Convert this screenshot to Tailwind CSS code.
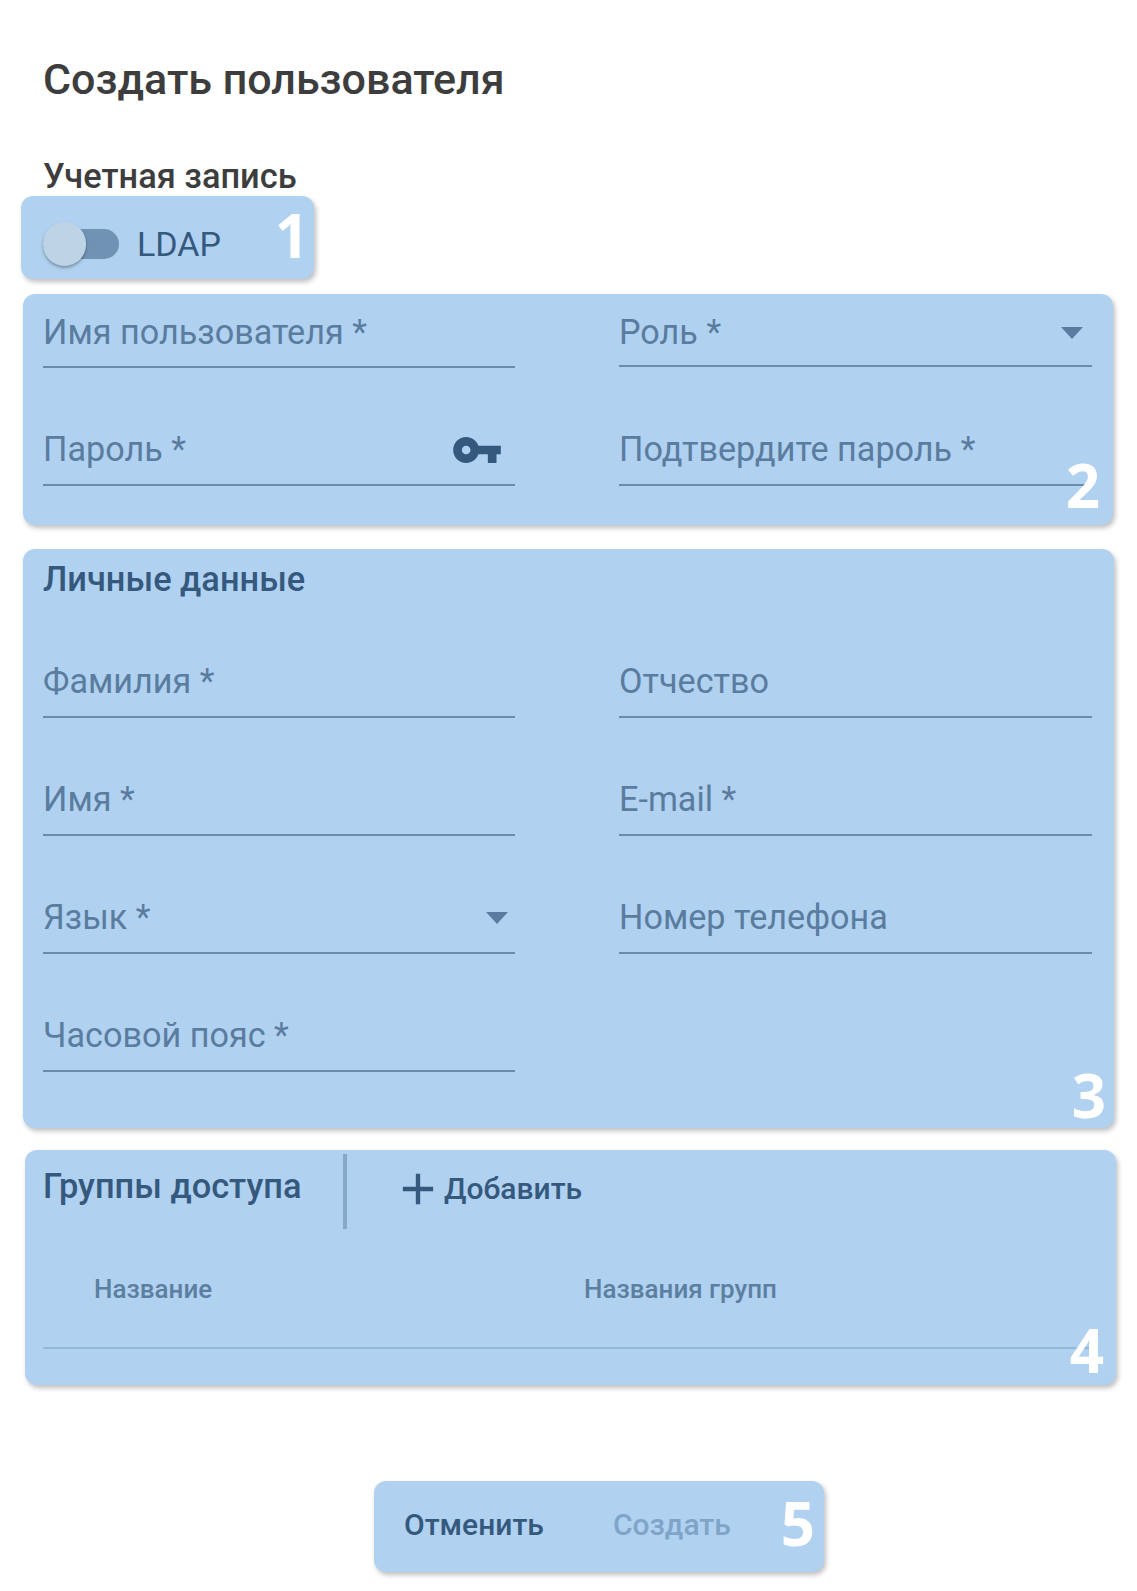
<!DOCTYPE html>
<html lang="ru">
<head>
  <meta charset="UTF-8">
  <title>Создать пользователя</title>
  <script src="https://cdn.jsdelivr.net/npm/@tailwindcss/browser@4"></script>
</head>
<body class="bg-white font-['Roboto',sans-serif] h-[1591px] overflow-hidden">
  <h1 class="pl-[43px] pt-[55px] text-[43px] leading-[48px] font-medium text-[#3d3d3d]">Создать пользователя</h1>
  <h2 class="pl-[43px] mt-[54px] text-[34.4px] leading-[38px] font-medium text-[#3d3d3d]">Учетная запись</h2>

  <!-- 1: LDAP -->
  <div class="relative ml-[21px] mt-[1px] w-[293px] h-[83px] rounded-[12px] bg-[#b0d1f0] shadow-[2px_3px_5px_rgba(0,0,0,0.25)] flex items-center pl-[22px]">
    <div class="relative w-[76px] h-[44px] flex items-center mt-[13px]">
      <div class="w-full h-[30px] rounded-full bg-[#7092b3]"></div>
      <div class="absolute left-0 top-0 w-[43px] h-[44px] rounded-full bg-[#bdd3e6] shadow-[0_2px_3px_rgba(0,0,0,0.3)]"></div>
    </div>
    <span class="ml-[18px] mt-[12px] text-[34px] leading-[40px] text-[#35587d]">LDAP</span>
    <span class="absolute right-[5px] top-[7px] font-['Open_Sans',sans-serif] font-bold text-[60px] leading-[64px] text-white">1</span>
  </div>

  <!-- 2: account fields -->
  <div class="relative ml-[23px] mt-[15px] w-[1090px] h-[231px] rounded-[12px] bg-[#b0d1f0] shadow-[2px_3px_5px_rgba(0,0,0,0.25)] pl-[20px] pt-[8px]">
    <div class="grid grid-cols-[472px_473px] gap-x-[104px] gap-y-[52px]">
      <div class="h-[66px] pb-[2px] flex items-center border-b-2 border-[#6a8cad] text-[34.2px] text-[#5a7c9e]">Имя пользователя *</div>
      <div class="h-[65px] pb-[2px] flex items-center justify-between border-b-2 border-[#6a8cad] text-[34.2px] text-[#5a7c9e]">
        Роль *
        <svg class="mr-[9px] w-[22px] h-[12px]" viewBox="0 0 22 12"><path d="M0 0h22L11 12z" fill="#5a7c9e"/></svg>
      </div>
      <div class="h-[66px] pb-[4px] flex items-center justify-between border-b-2 border-[#6a8cad] text-[34.2px] text-[#5a7c9e]">
        Пароль *
        <svg class="mr-[12px] w-[52px] h-[52px]" viewBox="0 0 24 24"><path fill="#35587d" d="M12.65 10C11.83 7.67 9.61 6 7 6c-3.31 0-6 2.69-6 6s2.69 6 6 6c2.61 0 4.83-1.67 5.65-4H17v4h4v-4h2v-4H12.65zM7 14c-1.1 0-2-.9-2-2s.9-2 2-2 2 .9 2 2-.9 2-2 2z"/></svg>
      </div>
      <div class="h-[66px] pb-[4px] flex items-center border-b-2 border-[#6a8cad] text-[34.2px] text-[#5a7c9e]">Подтвердите пароль *</div>
    </div>
    <span class="absolute right-[13px] top-[159px] font-['Open_Sans',sans-serif] font-bold text-[60px] leading-[64px] text-white">2</span>
  </div>

  <!-- 3: personal data -->
  <div class="relative ml-[23px] mt-[24px] w-[1091px] h-[579px] rounded-[12px] bg-[#b0d1f0] shadow-[2px_3px_5px_rgba(0,0,0,0.25)] pl-[20px] pt-[11px]">
    <h3 class="text-[34.4px] leading-[38px] font-medium text-[#35587d]">Личные данные</h3>
    <div class="mt-[54px] grid grid-cols-[472px_473px] gap-x-[104px] gap-y-[52px]">
      <div class="h-[66px] pb-[4px] flex items-center border-b-2 border-[#6a8cad] text-[34.2px] text-[#5a7c9e]">Фамилия *</div>
      <div class="h-[66px] pb-[4px] flex items-center border-b-2 border-[#6a8cad] text-[34.2px] text-[#5a7c9e]">Отчество</div>
      <div class="h-[66px] pb-[4px] flex items-center border-b-2 border-[#6a8cad] text-[34.2px] text-[#5a7c9e]">Имя *</div>
      <div class="h-[66px] pb-[4px] flex items-center border-b-2 border-[#6a8cad] text-[34.2px] text-[#5a7c9e]">E-mail *</div>
      <div class="h-[66px] pb-[4px] flex items-center justify-between border-b-2 border-[#6a8cad] text-[34.2px] text-[#5a7c9e]">
        Язык *
        <svg class="mr-[7px] w-[22px] h-[12px]" viewBox="0 0 22 12"><path d="M0 0h22L11 12z" fill="#5a7c9e"/></svg>
      </div>
      <div class="h-[66px] pb-[4px] flex items-center border-b-2 border-[#6a8cad] text-[34.2px] text-[#5a7c9e]">Номер телефона</div>
      <div class="h-[66px] pb-[4px] flex items-center border-b-2 border-[#6a8cad] text-[34.2px] text-[#5a7c9e]">Часовой пояс *</div>
    </div>
    <span class="absolute right-[8px] top-[514px] font-['Open_Sans',sans-serif] font-bold text-[60px] leading-[64px] text-white">3</span>
  </div>

  <!-- 4: access groups -->
  <div class="relative ml-[25px] mt-[22px] w-[1091px] h-[235px] rounded-[12px] bg-[#b0d1f0] shadow-[2px_3px_5px_rgba(0,0,0,0.25)] pl-[18px] pt-[4px]">
    <div class="flex items-start">
      <h3 class="w-[300px] mt-[13px] text-[34.4px] leading-[38px] font-medium text-[#35587d]">Группы доступа</h3>
      <div class="w-[4px] h-[75px] bg-[#86a8c9]"></div>
      <button class="ml-[45px] mt-[9px] flex items-center text-[30px] leading-[52px] font-medium text-[#35587d]">
        <svg class="w-[52px] h-[52px]" viewBox="0 0 24 24"><path fill="#35587d" d="M19 13h-6v6h-2v-6H5v-2h6V5h2v6h6v2z"/></svg>
        <span>Добавить</span>
      </button>
    </div>
    <div class="mt-[42px] mr-[25px] h-[78px] grid grid-cols-[490px_1fr] pl-[51px] pt-[3px] border-b-2 border-[#94b8da] text-[26px] leading-[30px] font-medium text-[#5c7fa0]">
      <span>Название</span>
      <span>Названия групп</span>
    </div>
    <span class="absolute right-[12px] top-[168px] font-['Open_Sans',sans-serif] font-bold text-[60px] leading-[64px] text-white">4</span>
  </div>

  <!-- 5: actions -->
  <div class="relative ml-[374px] mt-[96px] w-[450px] h-[91px] pb-[4px] rounded-[12px] bg-[#b0d1f0] shadow-[2px_3px_5px_rgba(0,0,0,0.25)] flex items-center pl-[30px] text-[30px] font-medium">
    <button class="text-[#35587d]">Отменить</button>
    <button class="ml-[69px] text-[#7fa4c8]">Создать</button>
    <span class="absolute right-[9px] top-[10px] font-['Open_Sans',sans-serif] font-bold text-[60px] leading-[64px] text-white">5</span>
  </div>
</body>
</html>
